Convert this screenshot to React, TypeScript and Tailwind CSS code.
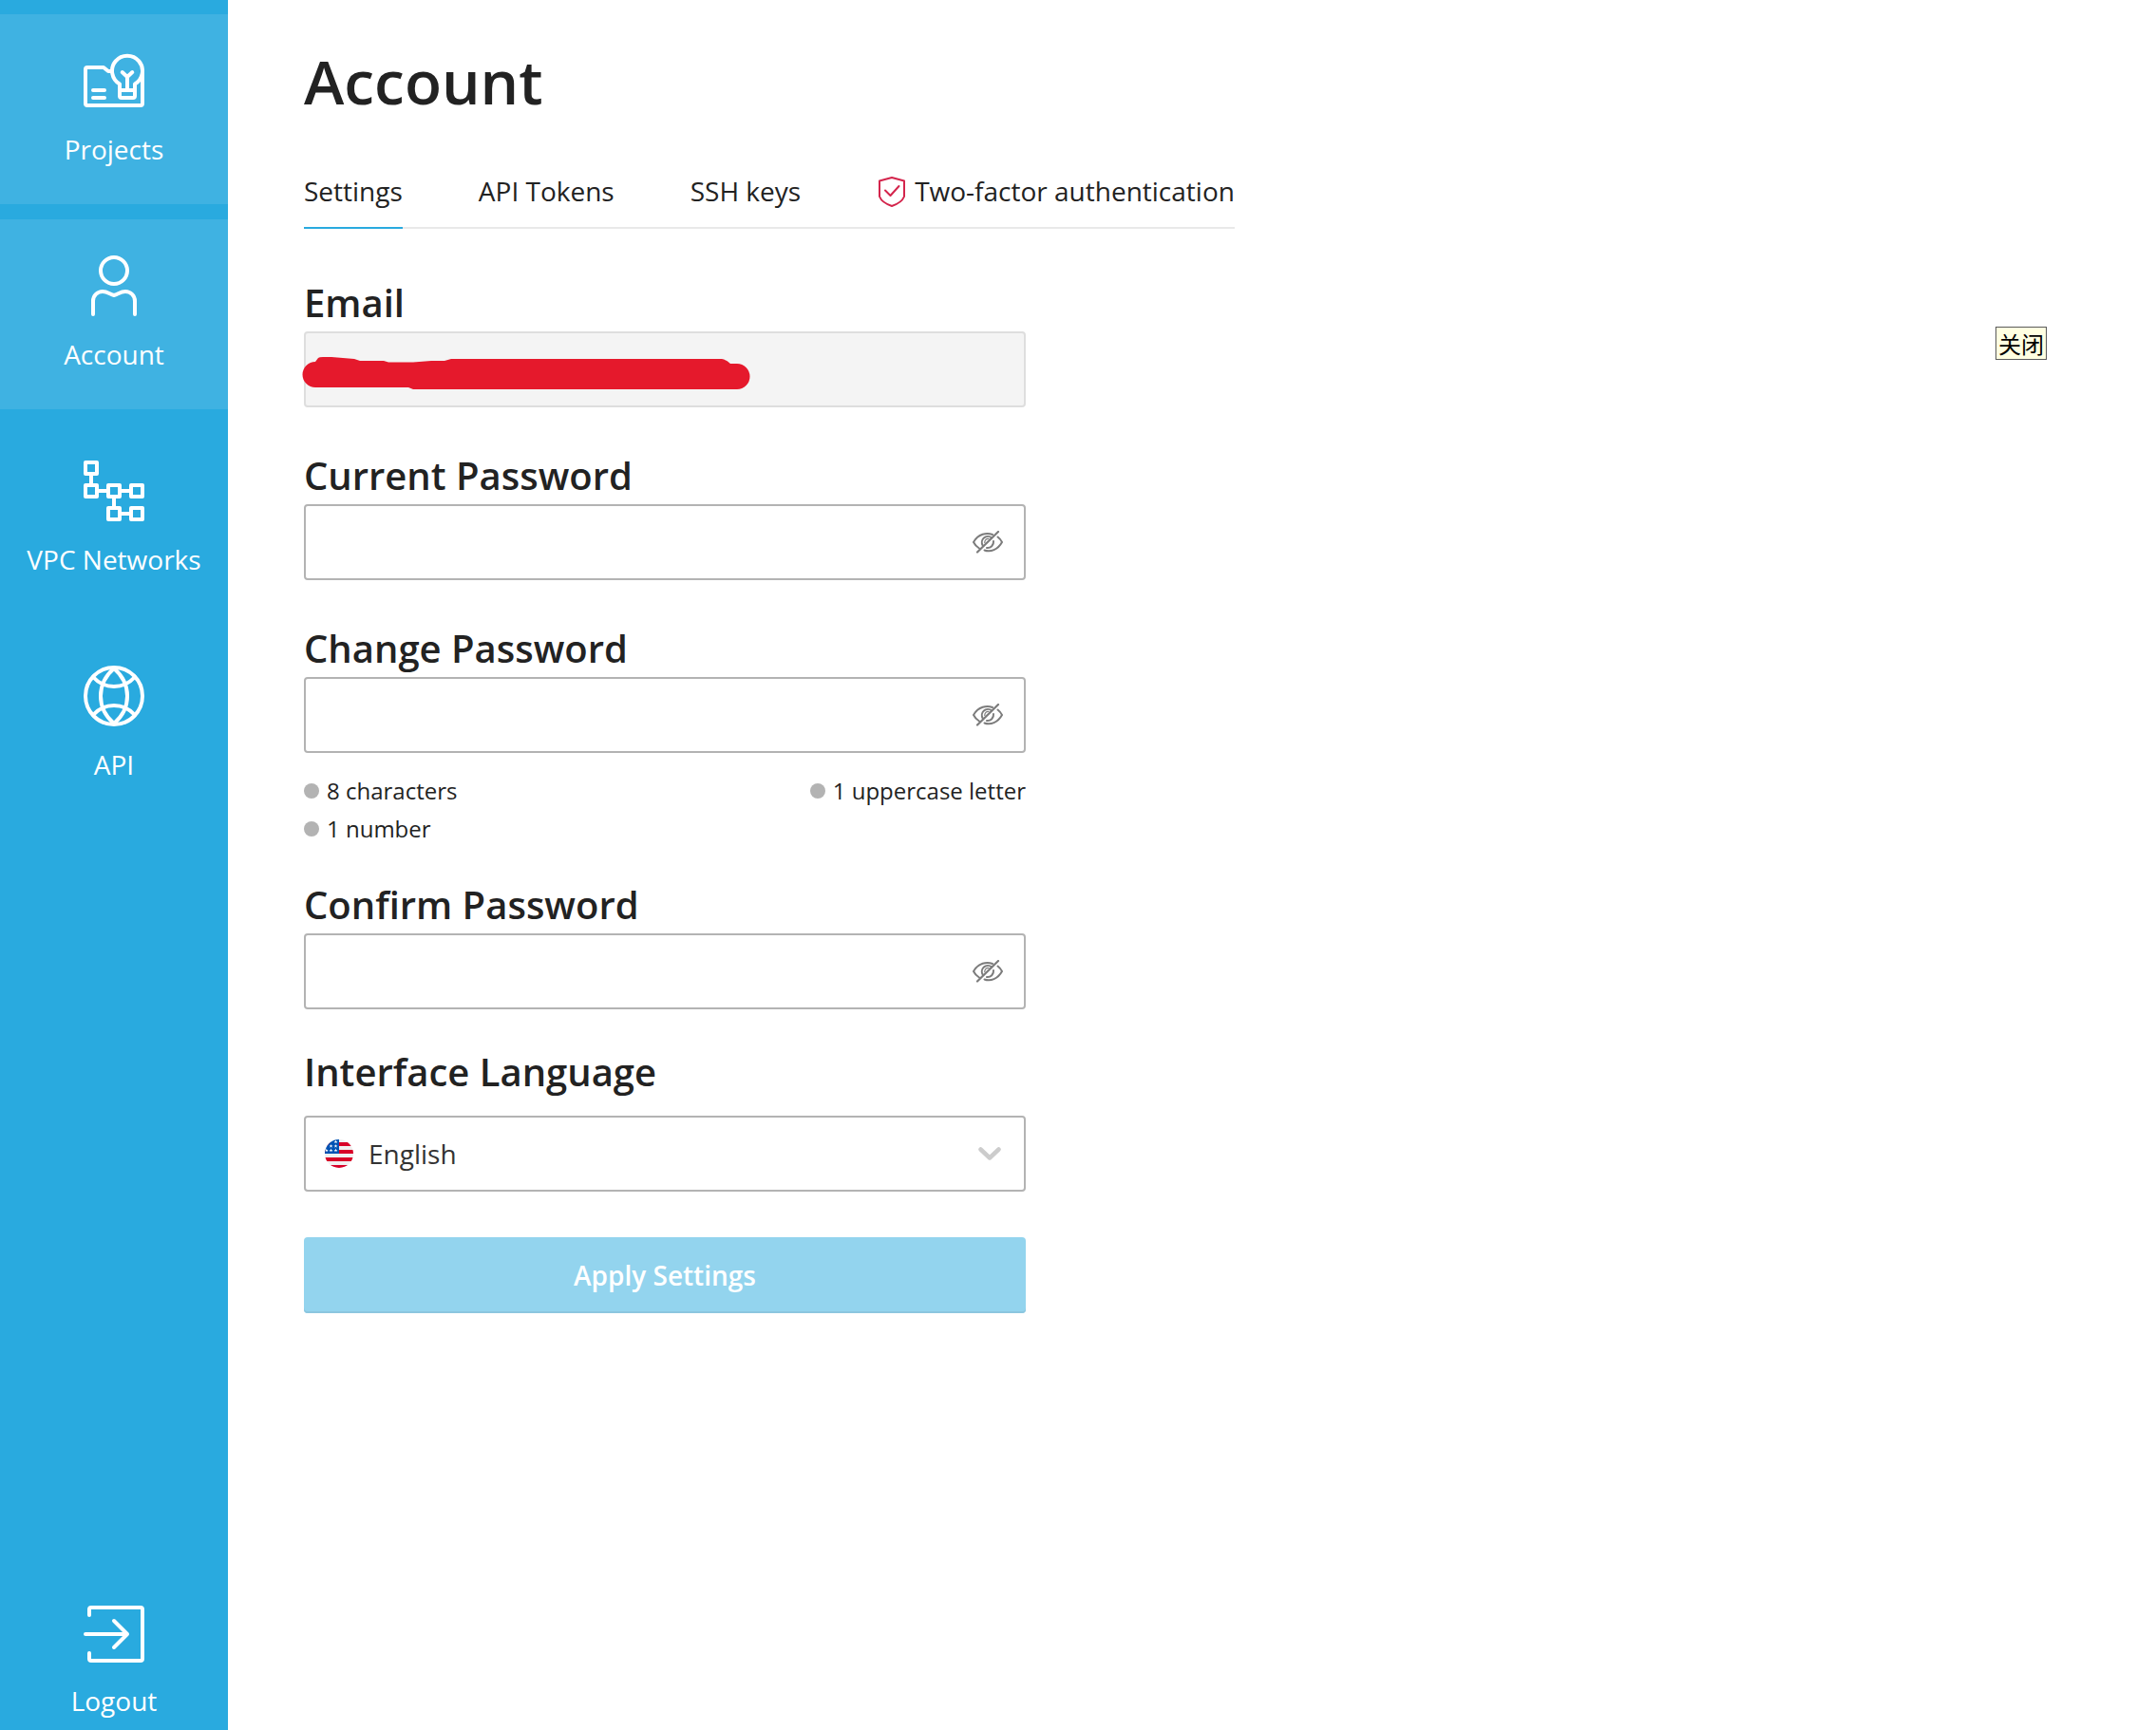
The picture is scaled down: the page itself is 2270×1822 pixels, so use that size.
import type { ReactNode } from "react";

function Icon({ children }: { children: ReactNode }) {
  return (
    <svg
      viewBox="0 0 64 64"
      className="size-16 shrink-0"
      fill="none"
      stroke="currentColor"
      strokeWidth="4"
      strokeLinecap="round"
      strokeLinejoin="round"
      aria-hidden="true"
    >
      {children}
    </svg>
  );
}

const ProjectsIcon = () => (
  <Icon>
    <path d="M28 22H26L21 18H4Q2 18 2 20V56Q2 58 4 58H60Q62 58 62 56V24" />
    <path d="M54 42V35.500A16 16 0 1 0 38 35.500V48Q38 50 40 50H52Q54 50 54 48V42H38" />
    <path d="M46 42V28M40.700 23L46 28L51.300 23M10 42H22M10 50H22" />
  </Icon>
);

const AccountIcon = () => (
  <Icon>
    <circle cx="32" cy="16" r="14" />
    <path d="M10 62V48A10 10 0 0 1 20 38C25 38 28 41 32 42C36 41 39 38 44 38A10 10 0 0 1 54 48V62" />
  </Icon>
);

const NetworkIcon = () => (
  <Icon>
    <rect x="2" y="2" width="12" height="12" />
    <rect x="2" y="26" width="12" height="12" />
    <rect x="26" y="26" width="12" height="12" />
    <rect x="50" y="26" width="12" height="12" />
    <rect x="26" y="50" width="12" height="12" />
    <rect x="50" y="50" width="12" height="12" />
    <path d="M8 14V26M14 32H26M38 32H50M32 38V50M38 56H50" />
  </Icon>
);

const GlobeIcon = () => (
  <Icon>
    <circle cx="32" cy="32" r="30" />
    <path d="M32 3C13.300 19 13.300 45 32 61C50.700 45 50.700 19 32 3Z" />
    <path d="M10 12Q19 22 32 22Q45 22 54 12M10 52Q19 42 32 42Q45 42 54 52" />
  </Icon>
);

const LogoutIcon = () => (
  <Icon>
    <path d="M6 14V8Q6 6 8 6H60Q62 6 62 8V60Q62 62 60 62H8Q6 62 6 60V54" />
    <path d="M2 34H46M32 20L46 34L32 48" />
  </Icon>
);

function EyeOffIcon() {
  return (
    <svg viewBox="0 0 32 24" className="h-6 w-8" fill="none" stroke="#7c7c7c" strokeWidth="2" strokeLinecap="round" aria-hidden="true">
      <path d="M5 22.500L27 1" strokeWidth="2.200" />
      <path d="M21 4C15 1.800 6 3 1 12C2.500 15 4.500 17 7 18.500" />
      <path d="M26.500 6.500C28.500 8 30 10 31 12C26.500 20 19 22.800 12.500 20.500" />
      <path d="M20 7.300A6.300 6.300 0 0 0 10.700 15.500" />
      <path d="M22 11A6.300 6.300 0 0 1 15 18" />
      <path d="M17 8.500A3.600 3.600 0 0 0 12.800 12.500" strokeWidth="1.200" />
    </svg>
  );
}

function ShieldIcon() {
  return (
    <svg viewBox="0 0 28 32" className="h-8 w-7" fill="none" stroke="#d4254c" strokeWidth="2" strokeLinecap="round" strokeLinejoin="round" aria-hidden="true">
      <path d="M14 1L27 4.500V21C25 26 20 29 14 31C8 29 3 26 1 21V4.500Z" />
      <path d="M7 14.500L12.500 20L21.500 10" />
    </svg>
  );
}

const stars = [
  [11.5, 2.5],
  [6.500, 7],
  [11.5, 7],
  [1.800, 11.5],
  [6.500, 11.5],
  [11.5, 11.5],
];

function FlagIcon() {
  return (
    <svg viewBox="0 0 30 30" className="size-[30px]" aria-hidden="true">
      <defs>
        <clipPath id="flag-disc">
          <circle cx="15" cy="15" r="15" />
        </clipPath>
      </defs>
      <g clipPath="url(#flag-disc)">
        <rect width="30" height="30" fill="#f0f0f0" />
        <path d="M0 3H30V7H0ZM0 11H30V15H0ZM0 19H30V23H0ZM0 27H30V30H0Z" fill="#d80027" />
        <rect width="15" height="15" fill="#0052b4" />
        {stars.map(([x, y]) => (
          <path
            key={`${x}-${y}`}
            transform={`translate(${x} ${y})`}
            d="M0-2L.5-.6H2L.8.3L1.200 1.700L0 .8L-1.200 1.700L-.8.300L-2-.6H-.5Z"
            fill="#fff"
          />
        ))}
      </g>
    </svg>
  );
}

function NavItem({ icon, label, active }: { icon: ReactNode; label: string; active?: boolean }) {
  return (
    <a
      href="#"
      className={`flex h-[200px] shrink-0 flex-col items-center gap-5 pt-[38px] text-[28px] leading-10 text-white ${active ? "bg-[#3fb2e2]" : ""}`}
    >
      {icon}
      {label}
    </a>
  );
}

function PasswordField({ id, label }: { id: string; label: string }) {
  return (
    <div>
      <label htmlFor={id} className="block text-[40px] leading-[60px] font-semibold">
        {label}
      </label>
      <div className="flex h-20 items-center rounded-sm border-2 border-[#b3b3b3] pr-[22px]">
        <input id={id} type="password" className="h-full min-w-0 flex-1 px-5 text-[28px] outline-none" />
        <button type="button" aria-label={`Show ${label}`}>
          <EyeOffIcon />
        </button>
      </div>
    </div>
  );
}

function Rule({ children }: { children: ReactNode }) {
  return (
    <li className="flex items-center gap-2">
      <span className="size-4 rounded-full bg-[#b3b3b3]" />
      {children}
    </li>
  );
}

export default function App() {
  return (
    <div className="flex h-screen overflow-hidden bg-white font-['Open_Sans',sans-serif] text-[#222222]">
      <nav className="flex w-60 shrink-0 flex-col bg-[#29aadf] pt-[15px]">
        <div className="flex flex-col gap-4">
          <NavItem icon={<ProjectsIcon />} label="Projects" active />
          <NavItem icon={<AccountIcon />} label="Account" active />
          <NavItem icon={<NetworkIcon />} label="VPC Networks" />
          <NavItem icon={<GlobeIcon />} label="API" />
        </div>
        <a href="#" className="mt-auto flex flex-col items-center gap-5 pb-[11px] text-[28px] leading-10 text-white">
          <LogoutIcon />
          Logout
        </a>
      </nav>

      <main className="relative min-w-0 flex-1 px-20 pt-[46px]">
        <h1 className="text-[64px] leading-[80px] font-semibold">Account</h1>

        <div className="mt-[55px] flex w-fit gap-20 border-b-2 border-[#e9e9e9] text-[28px] leading-10">
          <a href="#" className="-mb-0.5 border-b-2 border-[#29aadf] pb-[18px]">Settings</a>
          <a href="#">API Tokens</a>
          <a href="#">SSH keys</a>
          <a href="#" className="flex gap-2.5 pl-0.5">
            <span className="flex h-[42px] items-center">
              <ShieldIcon />
            </span>
            Two-factor authentication
          </a>
        </div>

        <form className="mt-12 flex w-full max-w-[760px] flex-col">
          <div className="flex flex-col gap-[42px]">
            <div>
              <label htmlFor="email" className="block text-[40px] leading-[60px] font-semibold">
                Email
              </label>
              <div className="relative h-20">
                <input
                  id="email"
                  type="email"
                  disabled
                  className="size-full rounded-sm border-2 border-[#dedede] bg-[#f4f4f4] px-5 text-[28px]"
                />
                <svg viewBox="0 0 472 34" className="absolute top-[27px] -left-0.5 h-[34px] w-[472px]" aria-hidden="true">
                  <path
                    d="M14 5L17 1Q18 0 22 0H31L55 2L61 4H86L91 5.500H117L136 4H150L157 2H442Q447 3 451 7H458A13.500 13.500 0 0 1 458 34H117L112 32H14A13.500 13.500 0 0 1 14 5Z"
                    fill="#e5192c"
                  />
                </svg>
              </div>
            </div>
            <PasswordField id="current-password" label="Current Password" />
            <PasswordField id="change-password" label="Change Password" />
          </div>

          <ul className="mt-5 grid grid-cols-[1fr_auto] text-2xl leading-10">
            <Rule>8 characters</Rule>
            <Rule>1 uppercase letter</Rule>
            <Rule>1 number</Rule>
          </ul>

          <div className="mt-[30px]">
            <PasswordField id="confirm-password" label="Confirm Password" />
          </div>

          <label htmlFor="language" className="mt-9 block text-[40px] leading-[60px] font-semibold">
            Interface Language
          </label>
          <div className="relative mt-4 h-20">
            <select
              id="language"
              defaultValue="en"
              className="size-full appearance-none rounded-sm border-2 border-[#b3b3b3] bg-white pl-[66px] text-[28px] text-[#333333]"
            >
              <option value="en">English</option>
            </select>
            <span className="pointer-events-none absolute inset-0 flex items-center justify-between pr-[26px] pl-[22px]">
              <FlagIcon />
              <svg viewBox="0 0 24 14" className="h-3.5 w-6" fill="none" stroke="#cccccc" strokeWidth="4.500" strokeLinecap="round" strokeLinejoin="round" aria-hidden="true">
                <path d="M2.500 2.500L12 11.500L21.500 2.500" />
              </svg>
            </span>
          </div>

          <button
            type="button"
            className="mt-12 h-20 rounded-sm bg-[#93d4ee] text-[28px] leading-10 font-semibold text-white shadow-[inset_0_-2px_0_#8cc6df]"
          >
            Apply Settings
          </button>
        </form>

        <div
          role="tooltip"
          className="absolute top-[344px] right-[115px] border border-[#5a5a5a] bg-[#ffffe1] px-0.5 font-['Noto_Sans_CJK_SC',sans-serif] text-2xl leading-[33px] text-black"
        >
          关闭
        </div>
      </main>
    </div>
  );
}
